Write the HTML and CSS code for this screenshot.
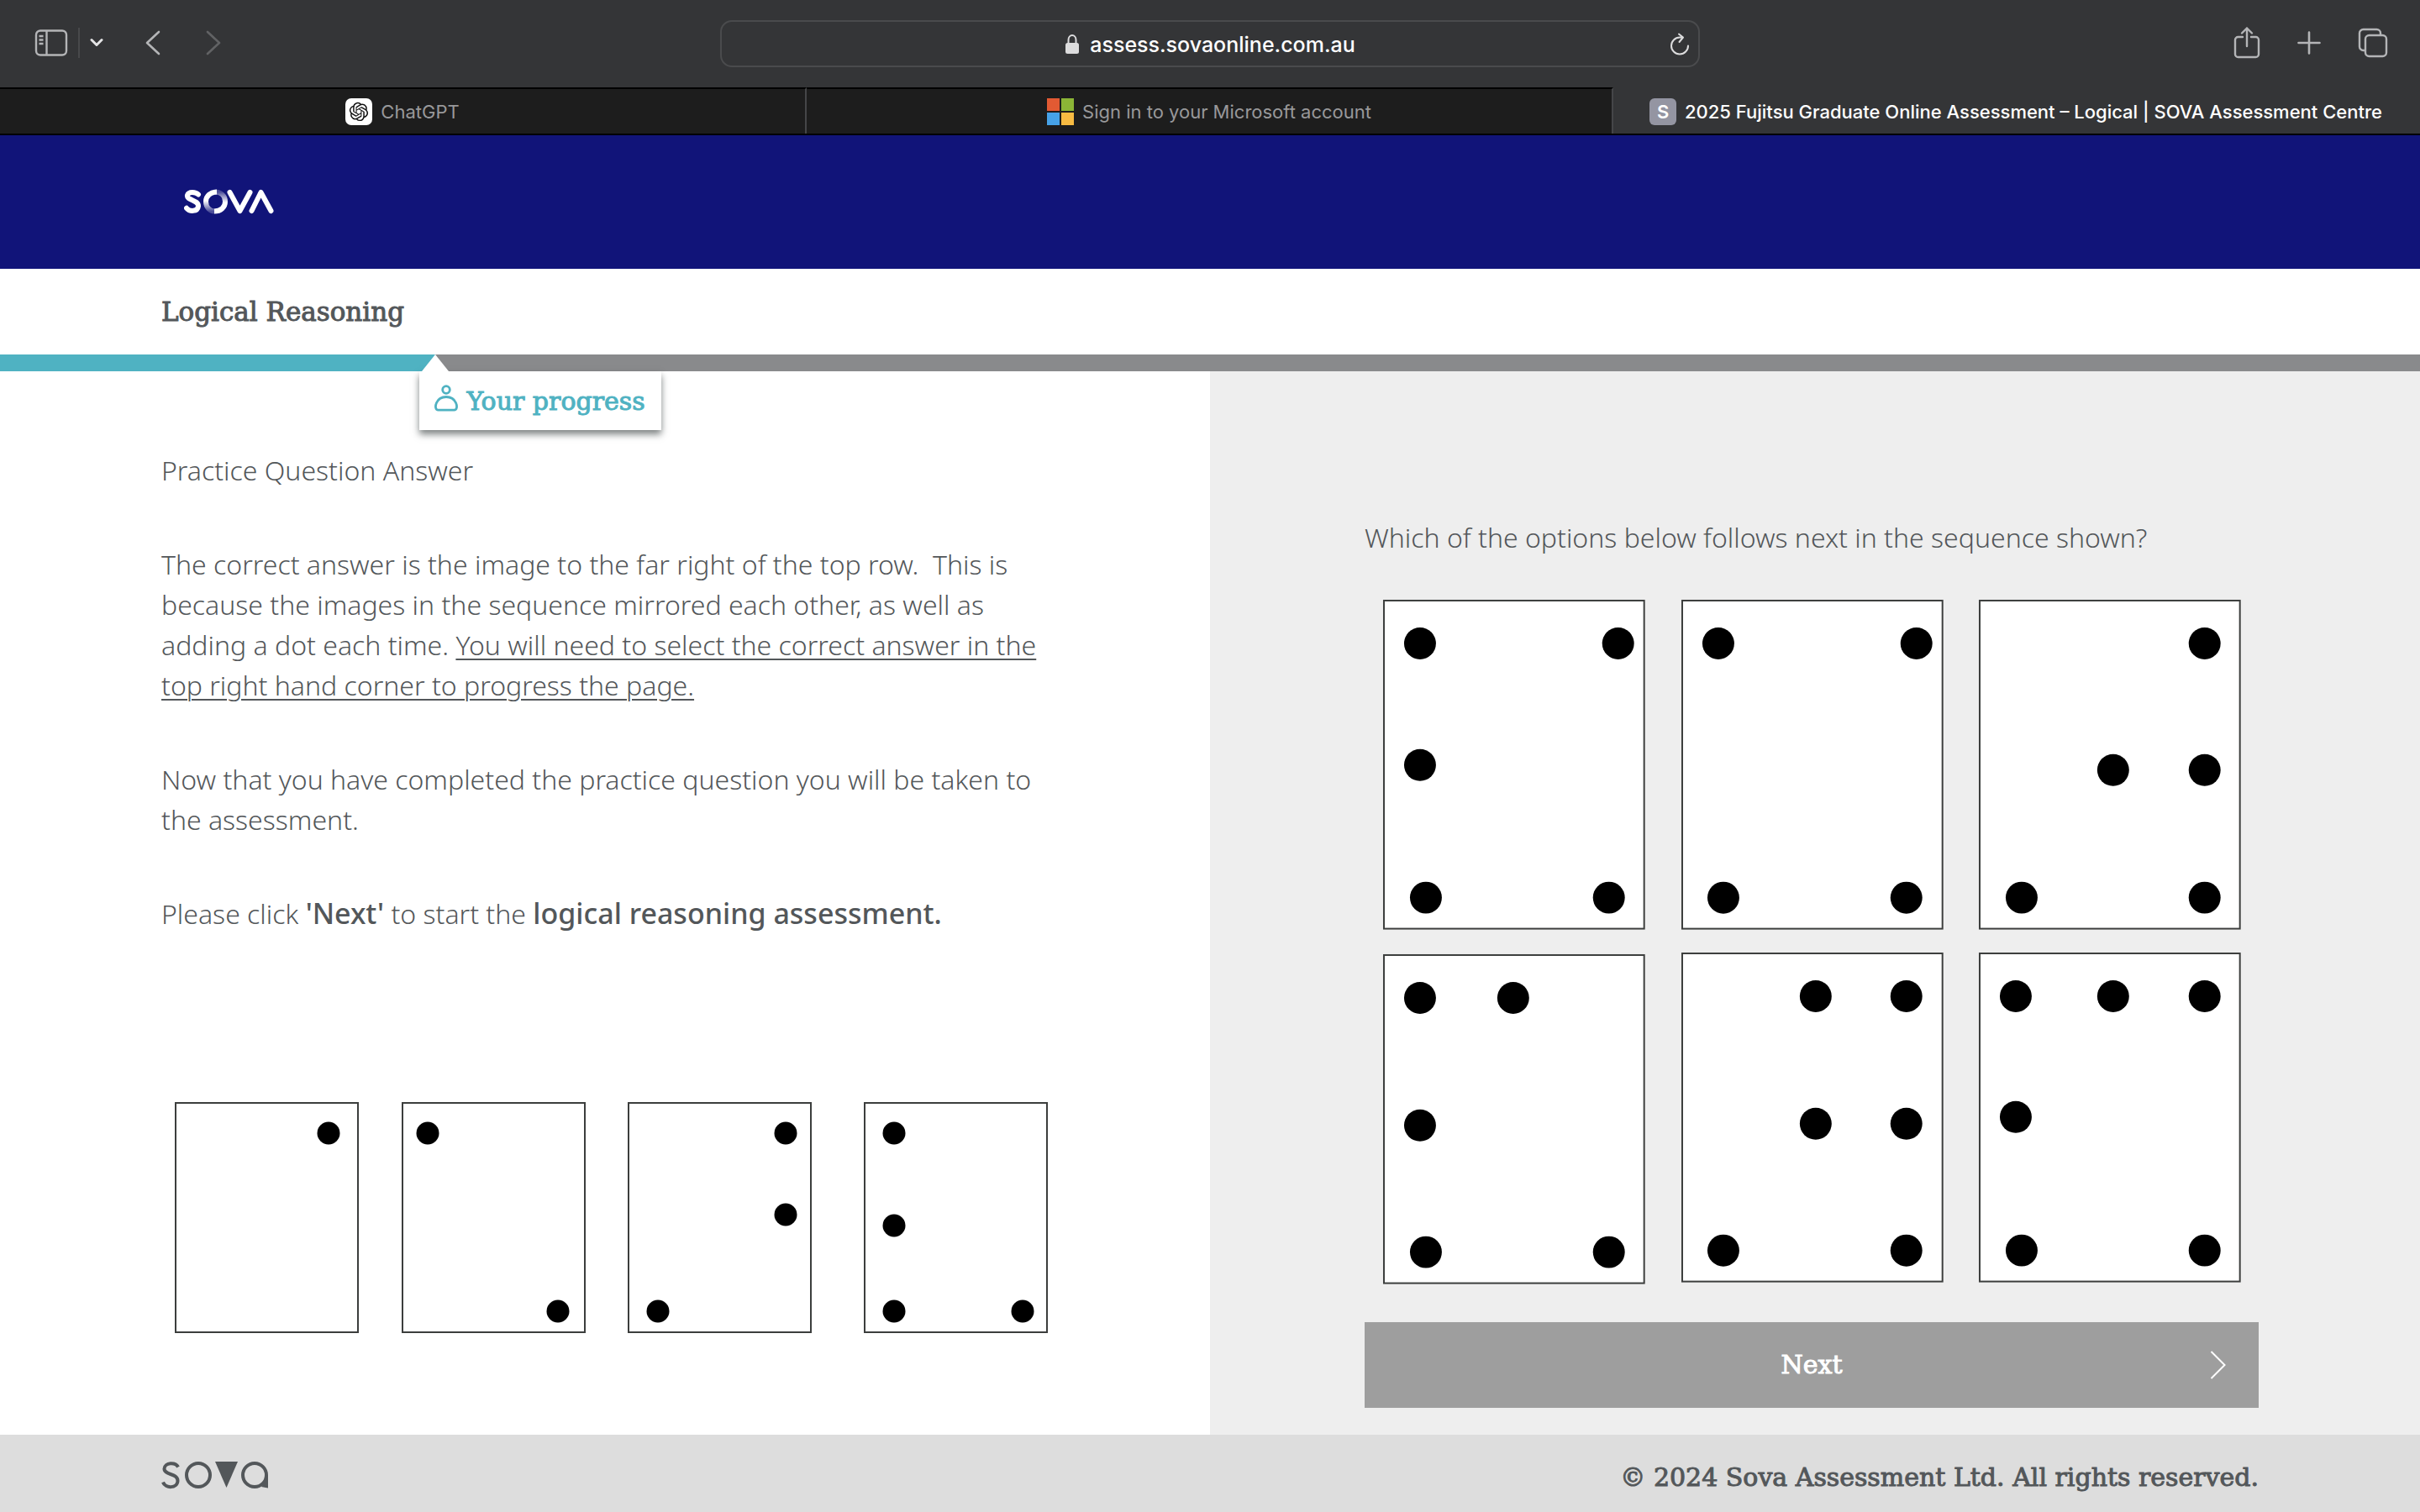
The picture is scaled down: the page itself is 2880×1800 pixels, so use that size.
FILE: index.html
```html
<!DOCTYPE html>
<html lang="en">
<head>
<meta charset="utf-8">
<title>2025 Fujitsu Graduate Online Assessment – Logical | SOVA Assessment Centre</title>
<link rel="stylesheet" href="styles.css">
</head>
<body>
<div class="browser">
  <div class="toolbar">
    <div class="tools tools-left">
      <button class="tool" aria-label="Sidebar">
        <svg width="40" height="32" viewBox="0 0 40 32" fill="none" stroke="currentColor" stroke-width="2.400"><rect x="2" y="1.500" width="36" height="29" rx="5"/><path d="M14.500 2v28M5.500 8h5M5.500 12.500h5M5.500 17h5"/></svg>
      </button>
      <span class="tool-divider"></span>
      <button class="tool tool-menu" aria-label="Tab groups">
        <svg width="16" height="12" viewBox="0 0 16 12" fill="none" stroke="currentColor" stroke-width="3" stroke-linecap="round" stroke-linejoin="round"><path d="M2 2.500l6 6 6-6"/></svg>
      </button>
      <button class="tool tool-back" aria-label="Back">
        <svg width="20" height="32" viewBox="0 0 20 32" fill="none" stroke="currentColor" stroke-width="2.600" stroke-linecap="round" stroke-linejoin="round"><path d="M17 3L3 16l14 13"/></svg>
      </button>
      <button class="tool tool-forward" aria-label="Forward" disabled>
        <svg width="20" height="32" viewBox="0 0 20 32" fill="none" stroke="currentColor" stroke-width="2.600" stroke-linecap="round" stroke-linejoin="round"><path d="M3 3l14 13L3 29"/></svg>
      </button>
    </div>
    <div class="address">
      <svg class="lock" width="18" height="26" viewBox="0 0 18 26"><path d="M4.500 12V7.500a4.500 5.500 0 0 1 9 0V12" fill="none" stroke="#dcdcdd" stroke-width="2"/><rect x="1" y="11" width="16" height="13" rx="2.500" fill="#dcdcdd"/></svg>
      <span>assess.sovaonline.com.au</span>
      <button class="tool reload" aria-label="Reload">
        <svg width="24" height="28" viewBox="0 0 24 28" fill="none" stroke="currentColor" stroke-width="2" stroke-linecap="round" stroke-linejoin="round"><path d="M22 15.500a10 10 0 1 1-10-10h3.500M11 1.500l5 4-4.500 5.500"/></svg>
      </button>
    </div>
    <div class="tools tools-right">
      <button class="tool" aria-label="Share">
        <svg width="32" height="40" viewBox="0 0 32 40" fill="none" stroke="currentColor" stroke-width="2.400" stroke-linecap="round" stroke-linejoin="round"><path d="M11 13H5.500A3.500 3.500 0 0 0 2 16.500v17A3.500 3.500 0 0 0 5.500 37h21a3.500 3.500 0 0 0 3.500-3.500v-17a3.500 3.500 0 0 0-3.500-3.500H21M16 24V2.500M10 8.500l6-6 6 6"/></svg>
      </button>
      <button class="tool" aria-label="New tab">
        <svg width="28" height="28" viewBox="0 0 28 28" fill="none" stroke="currentColor" stroke-width="2.600" stroke-linecap="round"><path d="M14 1.500v25M1.500 14h25"/></svg>
      </button>
      <button class="tool" aria-label="Tab overview">
        <svg width="36" height="36" viewBox="0 0 36 36" fill="none" stroke="currentColor" stroke-width="2.400"><path d="M9 27H6.500A4.500 4.500 0 0 1 2 22.500v-16A4.500 4.500 0 0 1 6.500 2h16A4.500 4.500 0 0 1 27 6.500V9"/><rect x="9" y="9" width="25" height="25" rx="4.500"/></svg>
      </button>
    </div>
  </div>
  <nav class="tabs">
    <a class="tab" href="#chatgpt">
      <svg class="favicon" viewBox="0 0 32 32"><rect width="32" height="32" rx="7" fill="#fff"/><g transform="translate(4.800 4.800) scale(.93)" fill="#111"><path d="M22.280 9.820a5.980 5.980 0 0 0-.520-4.910 6.050 6.050 0 0 0-6.510-2.900A6.070 6.070 0 0 0 4.980 4.180a5.980 5.980 0 0 0-4 2.900 6.050 6.050 0 0 0 .750 7.100 5.980 5.980 0 0 0 .510 4.910 6.050 6.050 0 0 0 6.510 2.900A5.980 5.980 0 0 0 13.260 24a6.060 6.060 0 0 0 5.770-4.210 5.990 5.990 0 0 0 4-2.900 6.060 6.060 0 0 0-.750-7.070zm-9.020 12.610a4.480 4.480 0 0 1-2.880-1.040l.140-.080 4.780-2.760a.790.790 0 0 0 .390-.680v-6.740l2.020 1.170a.070.070 0 0 1 .040.050v5.580a4.500 4.500 0 0 1-4.490 4.500zM3.600 18.300a4.470 4.470 0 0 1-.540-3.010l.140.090 4.780 2.760a.770.770 0 0 0 .780 0l5.840-3.370v2.330a.080.080 0 0 1-.030.060L9.740 19.950A4.500 4.500 0 0 1 3.600 18.300zM2.340 7.900a4.490 4.490 0 0 1 2.370-1.970v5.670a.770.770 0 0 0 .390.680l5.810 3.350-2.020 1.170a.080.080 0 0 1-.070 0l-4.830-2.790A4.500 4.500 0 0 1 2.340 7.870zm16.600 3.860L13.100 8.360l2.020-1.160a.080.080 0 0 1 .070 0l4.830 2.790a4.490 4.490 0 0 1-.680 8.100v-5.680a.790.790 0 0 0-.400-.670zm2.010-3.020l-.140-.090-4.770-2.780a.780.780 0 0 0-.790 0L9.410 9.230V6.900a.070.070 0 0 1 .030-.060l4.830-2.790a4.500 4.500 0 0 1 6.680 4.660zM8.310 12.860l-2.020-1.160a.080.080 0 0 1-.040-.060V6.070a4.500 4.500 0 0 1 7.380-3.450l-.140.080L8.700 5.460a.790.790 0 0 0-.390.680zm1.100-2.370l2.600-1.500 2.610 1.500v3l-2.600 1.500-2.610-1.500z"/></g></svg>
      <span>ChatGPT</span>
    </a>
    <a class="tab" href="#microsoft">
      <svg class="favicon" viewBox="0 0 32 32"><path fill="#e25a33" d="M0 0h15v15H0z"/><path fill="#8bb536" d="M17 0h15v15H17z"/><path fill="#46a2e8" d="M0 17h15v15H0z"/><path fill="#f7bb42" d="M17 17h15v15H17z"/></svg>
      <span>Sign in to your Microsoft account</span>
    </a>
    <a class="tab tab-current" href="#sova">
      <span class="favicon favicon-letter">S</span>
      <span>2025 Fujitsu Graduate Online Assessment – Logical | SOVA Assessment Centre</span>
    </a>
  </nav>
</div>

<header class="masthead">
  <svg class="logo" width="108" height="30" viewBox="0 0 108 30" fill="none" stroke="#fff" stroke-width="6" stroke-linecap="round" stroke-linejoin="round" role="img" aria-label="SOVA">
    <defs>
      <linearGradient id="ring-left" x1="0" y1="0" x2="0" y2="1"><stop offset="0.450" stop-color="#fff"/><stop offset="1" stop-color="#fff" stop-opacity="0.250"/></linearGradient>
      <linearGradient id="ring-right" x1="0" y1="0" x2="0" y2="1"><stop offset="0" stop-color="#fff" stop-opacity="0.250"/><stop offset="0.550" stop-color="#fff"/></linearGradient>
    </defs>
    <path d="M17 6.500C14 3.300 5.500 2.500 4 7.300 2.500 13.800 17.500 12.500 17 20.500 16 27.500 6.500 27 3 22.800"/>
    <g stroke-linecap="butt"><path d="M39 3.500C32 3.500 26 8 26 15s5 11.500 10.500 11.500" stroke="url(#ring-left)"/><path d="M36.500 3.500C44 3.500 49 8 49 15s-5.500 11.500-13 11.500" stroke="url(#ring-right)"/></g>
    <path d="M54.500 4l12 22L78.500 4M80.500 26L91.500 4l12 22"/>
  </svg>
</header>

<h1 class="section-title">Logical Reasoning</h1>

<div class="progress">
  <div class="progress-fill" style="width:18%">
    <div class="progress-tag">
      <svg width="28" height="32" viewBox="0 0 28 32" fill="none" stroke="currentColor" stroke-width="2.800"><circle cx="14" cy="6" r="4.300"/><path d="M4.500 30.200C1.500 30.200.500 26 2.500 21.500 4.500 17 9 14.500 14 14.500s9.500 2.500 11.500 7c2 4.500 1 8.700-2 8.700z"/></svg>
      <span>Your progress</span>
    </div>
  </div>
</div>

<main class="panels">
  <section class="explain">
    <p>Practice Question Answer</p>
    <p>The correct answer is the image to the far right of the top row.&nbsp; This is because the images in the sequence mirrored each other, as well as adding a dot each time. <u>You will need to select the correct answer in the top right hand corner to progress the page.</u></p>
    <p>Now that you have completed the practice question you will be taken to the assessment.</p>
    <p>Please click <strong>'Next'</strong> to start the <strong>logical reasoning assessment.</strong></p>
    <svg class="sequence" viewBox="0 0 1056 280" role="img" aria-label="Sequence of four images">
      <g class="frame"><path d="M17 3h217v273H17zM287 3h217v273H287zM556 3h217v273H556zM837 3h217v273H837z"/></g>
      <circle cx="199" cy="39" r="13.500"/>
      <circle cx="317" cy="39" r="13.500"/><circle cx="472" cy="251" r="13.500"/>
      <circle cx="743" cy="39" r="13.500"/><circle cx="743" cy="136" r="13.500"/><circle cx="591" cy="251" r="13.500"/>
      <circle cx="872" cy="39" r="13.500"/><circle cx="872" cy="149" r="13.500"/><circle cx="872" cy="251" r="13.500"/><circle cx="1025" cy="251" r="13.500"/>
    </svg>
  </section>
  <section class="question">
    <p>Which of the options below follows next in the sequence shown?</p>
    <div class="options">
      <button class="option" aria-label="Option 1"><svg viewBox="0 0 355 422"><rect class="frame" x="23" y="23" width="310" height="391"/><circle cx="66" cy="74" r="19"/><circle cx="302" cy="74" r="19"/><circle cx="66" cy="219" r="19"/><circle cx="73" cy="377" r="19"/><circle cx="291" cy="377" r="19"/></svg></button>
      <button class="option" aria-label="Option 2"><svg viewBox="0 0 355 422"><rect class="frame" x="23" y="23" width="310" height="391"/><circle cx="66" cy="74" r="19"/><circle cx="302" cy="74" r="19"/><circle cx="72" cy="377" r="19"/><circle cx="290" cy="377" r="19"/></svg></button>
      <button class="option" aria-label="Option 3"><svg viewBox="0 0 355 422"><rect class="frame" x="23" y="23" width="310" height="391"/><circle cx="291" cy="74" r="19"/><circle cx="182" cy="225" r="19"/><circle cx="291" cy="225" r="19"/><circle cx="73" cy="377" r="19"/><circle cx="291" cy="377" r="19"/></svg></button>
      <button class="option" aria-label="Option 4"><svg viewBox="0 0 355 422"><rect class="frame" x="23" y="23" width="310" height="391"/><circle cx="66" cy="74" r="19"/><circle cx="177" cy="74" r="19"/><circle cx="66" cy="226" r="19"/><circle cx="73" cy="377" r="19"/><circle cx="291" cy="377" r="19"/></svg></button>
      <button class="option" aria-label="Option 5"><svg viewBox="0 0 355 422"><rect class="frame" x="23" y="21" width="310" height="391"/><circle cx="182" cy="72" r="19"/><circle cx="290" cy="72" r="19"/><circle cx="182" cy="224" r="19"/><circle cx="290" cy="224" r="19"/><circle cx="72" cy="375" r="19"/><circle cx="290" cy="375" r="19"/></svg></button>
      <button class="option" aria-label="Option 6"><svg viewBox="0 0 355 422"><rect class="frame" x="23" y="21" width="310" height="391"/><circle cx="66" cy="72" r="19"/><circle cx="182" cy="72" r="19"/><circle cx="291" cy="72" r="19"/><circle cx="66" cy="216" r="19"/><circle cx="73" cy="375" r="19"/><circle cx="291" cy="375" r="19"/></svg></button>
    </div>
    <button class="next">
      <span>Next</span>
      <svg width="20" height="34" viewBox="0 0 20 34" fill="none" stroke="currentColor" stroke-width="2"><path d="M1.500 1l16 16-16 16"/></svg>
    </button>
  </section>
</main>

<footer class="footer">
  <svg width="128" height="34" viewBox="0 0 128 34" fill="none" stroke="#53575a" stroke-width="4" role="img" aria-label="sova">
    <path d="M20 7.500C17 1.500 4 1.500 3.500 9.500 3.500 17.500 19.500 14.500 19.500 24 19 33.500 4.500 33 2 25.500"/>
    <circle cx="44" cy="17" r="14"/>
    <path d="M64 1h27L77.500 32z" fill="#53575a" stroke="none"/>
    <circle cx="111" cy="17" r="14"/>
    <path d="M123 17h4v15.500l-8-1.500 4-5z" fill="#53575a" stroke="none"/>
  </svg>
  <p>© 2024 Sova Assessment Ltd. All rights reserved.</p>
</footer>
</body>
</html>
```
FILE: styles.css
```css
* { box-sizing: border-box; }

body {
  margin: 0;
  min-height: 100vh;
  display: flex;
  flex-direction: column;
  background: #fff;
  color: #53575a;
  font: 350 32px/48px "Noto Sans", sans-serif;
}

p, h1 { margin: 0; }

button {
  border: 0;
  padding: 0;
  background: none;
  color: inherit;
  font: inherit;
}

svg { display: block; }

/* Browser chrome */
.browser {
  background: #343537;
  color: #b4b5b7;
  font: 400 22px/30px Inter, sans-serif;
}

.toolbar {
  display: grid;
  grid-template-columns: 1fr minmax(0, 1166px) 1fr;
  align-items: center;
  height: 104px;
}

.tools { display: flex; align-items: center; padding-bottom: 2px; }
.tools-left { padding-left: 41px; }
.tools-right { justify-content: flex-end; gap: 44px; padding-right: 38px; }
.tool-divider { width: 2px; height: 36px; margin: 0 12px; background: #48494b; }
.tool-menu { color: #e4e4e5; }
.tool-back { margin-left: 49px; }
.tool-forward { margin-left: 52px; color: #616264; }

.address {
  position: relative;
  display: flex;
  justify-content: center;
  align-items: center;
  gap: 12px;
  height: 56px;
  padding-top: 2px;
  border: 2px solid #4a4b4d;
  border-radius: 14px;
  color: #fff;
  font-size: 25px;
  font-weight: 500;
}
.reload { position: absolute; right: 10px; color: #dcdcdd; }

.tabs {
  display: grid;
  grid-template-columns: repeat(3, 1fr);
  border-bottom: 2px solid #000;
}
.tab {
  display: flex;
  justify-content: center;
  align-items: center;
  gap: 10px;
  height: 55px;
  border-top: 2px solid #000;
  border-right: 2px solid #454648;
  background: #1d1d1d;
  color: #98989a;
  text-decoration: none;
  white-space: nowrap;
}
.tab-current {
  border-color: #343537;
  background: #343537;
  color: #fff;
  font-weight: 450;
}
.favicon { width: 32px; height: 32px; }
.favicon-letter {
  border-radius: 6px;
  background: #9495a2;
  font-weight: 600;
  line-height: 32px;
  text-align: center;
}

/* Page header */
.masthead { padding: 64px 219px 65px; background: #111479; }

.section-title,
.progress-tag,
.next,
.footer {
  font-family: "DejaVu Serif", serif;
  font-size: 30px;
  font-weight: 400;
  -webkit-text-stroke: 1px currentColor;
}
.section-title { padding: 27px 192px; font-size: 31px; }

.progress { height: 20px; background: #898a8c; }
.progress-fill { position: relative; height: 20px; background: #4fb2c2; }
.progress-tag {
  position: absolute;
  top: 20px;
  left: calc(100% - 19px);
  display: flex;
  gap: 10px;
  padding: 12px 19px 10px 18px;
  background: #fff;
  box-shadow: 0 5px 8px rgba(40, 48, 48, 0.6);
  color: #4fb2c2;
  white-space: nowrap;
}
.progress-tag svg { margin-top: 4px; }
.progress-tag::before {
  content: "";
  position: absolute;
  top: -20px;
  left: 3px;
  border: 16px solid transparent;
  border-top: 0;
  border-bottom: 20px solid #fff;
}

/* Question panels */
.panels {
  flex: 1;
  display: grid;
  grid-template-columns: 1fr 1fr;
}
.explain { padding: 94px 192px 0; }
.explain p { margin-bottom: 64px; }
.explain u { text-decoration-thickness: 2px; text-underline-offset: 4px; }
.explain strong { font-size: 34px; font-weight: 500; line-height: 1; }
.sequence { width: 100%; margin-top: 198px; }
.frame { fill: #fff; stroke: #3c3e3d; stroke-width: 2; }

.question { padding: 174px 192px 32px 184px; background: #eee; }
.options {
  display: grid;
  grid-template-columns: repeat(3, 1fr);
  margin: 28px 0 39px;
}
.option svg { width: 100%; }
.next {
  display: grid;
  grid-template-columns: 1fr auto 1fr;
  align-items: center;
  width: 100%;
  height: 102px;
  padding: 0 38px;
  background: #9e9e9e;
  color: #fff;
}
.next span { grid-column: 2; }
.next svg { justify-self: end; }

.footer {
  display: flex;
  justify-content: space-between;
  padding: 27px 192px 17px;
  background: #ddd;
}
.footer svg { margin-top: 4px; }
```
